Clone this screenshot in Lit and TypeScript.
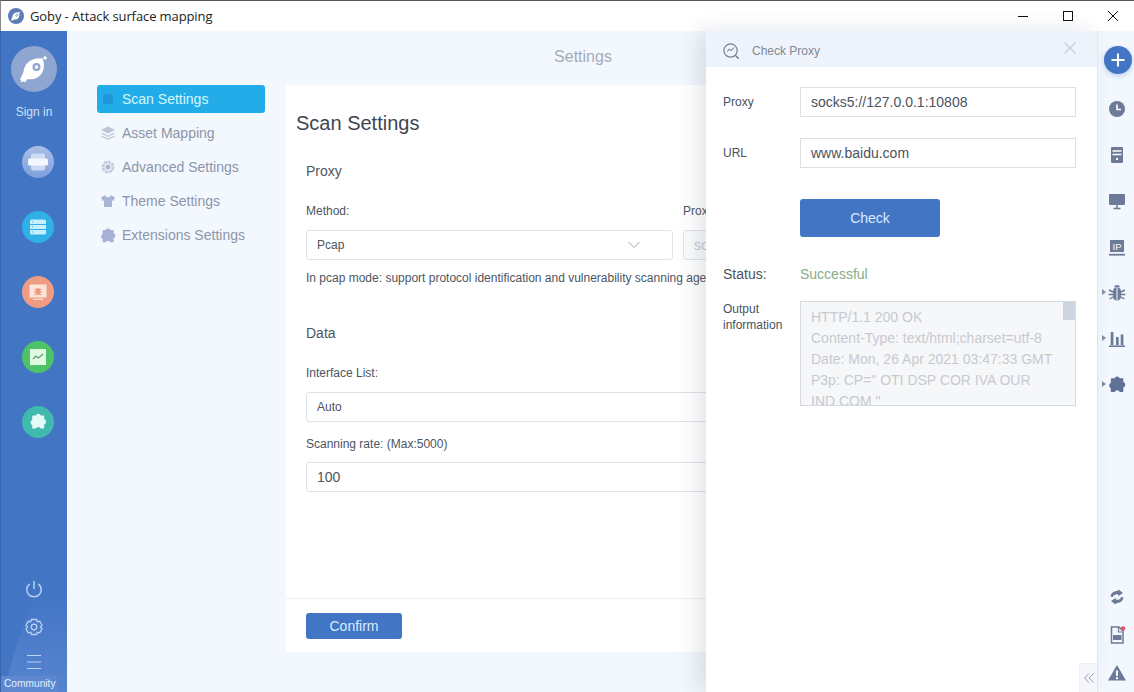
import { html, css, svg, LitElement } from "lit";
import { customElement } from "lit/decorators.js";

const FISH = svg`<path d="M31.500 12.500c-7-.8-13.500 1.500-17 7-1.200 2-1.800 4.200-2 6.500l-3.500 7.500 1.500.8-1.500 1.700 4-.5 1 1 2.500-3.500c5 1 11-.5 14.500-6 2.500-4.500 2.500-10 .5-14.500z" fill="#fff"/><circle cx="25.500" cy="21" r="4" fill="#8fa6d3"/><circle cx="25.500" cy="21" r="1.800" fill="#fff"/><circle cx="34" cy="12" r="1.700" fill="#fff"/>`;

const PUZZLE =
  "M5 3.500h2a2.300 2.300 0 0 1 4.200 0H14v3a2.300 2.300 0 0 1 0 4.400V14.500h-2.800a2.300 2.300 0 0 0-4.200 0H4v-3a2.300 2.300 0 0 1 0-4.200V4.500a1 1 0 0 1 1-1z";

const NAV = [
  {
    label: "Scan Settings",
    active: true,
    icon: svg`<rect x="3" y="3" width="10" height="10" rx="2" fill="#2196dc"/>`,
  },
  {
    label: "Asset Mapping",
    icon: svg`<path d="M8 1.500l7 3.500-7 3.500L1 5z" fill="#bcc6d8"/><path d="M1.500 8l6.500 3.300L14.500 8M1.500 11l6.500 3.300 6.500-3.300" fill="none" stroke="#bcc6d8" stroke-width="1.300"/>`,
  },
  {
    label: "Advanced Settings",
    icon: svg`<circle cx="8" cy="8" r="5" fill="none" stroke="#c3cddd" stroke-width="3" stroke-dasharray="3 .8"/><circle cx="8" cy="8" r="2.500" fill="#aab6cc"/>`,
  },
  {
    label: "Theme Settings",
    icon: svg`<path d="M5 2L1 4.500l1.500 3.500L4 7.300V14h8V7.300l1.500.7L15 4.500 11 2c-.5 1.500-1.500 2.200-3 2.200S5.500 3.500 5 2z" fill="#a9b5d6"/>`,
  },
  {
    label: "Extensions Settings",
    icon: svg`<path d="${PUZZLE}" fill="#a9b0d8" transform="translate(-1.800 -.800) scale(1.100)"/>`,
  },
];

const SIDE = [
  {
    cls: "c1",
    icon: svg`<rect x="3" y="1.500" width="14" height="17" rx="2" fill="#dbe5f9" opacity=".8"/><rect x="0" y="6.500" width="20" height="7" rx="1.500" fill="#f4f7fd"/>`,
  },
  {
    cls: "c2",
    icon: svg`<rect x="2" y="2.500" width="16" height="15" rx="1.500" fill="#c8f0fb"/><path d="M2 7.500h16M2 12.500h16" stroke="#2fb0e6" stroke-width="1"/><path d="M4 5h1M4 10h1M4 15h1" stroke="#2fb0e6" stroke-width="1"/>`,
  },
  {
    cls: "c3",
    icon: svg`<rect x="1.500" y="2.500" width="17" height="13" fill="#fde4da"/><path d="M5 17.300h10" stroke="#fde4da" stroke-width="1.200"/><ellipse cx="10" cy="9.500" rx="2.500" ry="3.500" fill="#eb9a80"/><path d="M6.500 7l2 1M13.500 7l-2 1M6 10h2M14 10h-2M6.500 13l2-1M13.500 13l-2-1" stroke="#eb9a80"/>`,
  },
  {
    cls: "c4",
    icon: svg`<rect x="2" y="2" width="16" height="16" fill="#e0f9e0"/><path d="M5 12l3-3 2.500 2 4.500-4" fill="none" stroke="#5c9c72" stroke-width="1.300"/>`,
  },
  {
    cls: "c5",
    icon: svg`<path d="${PUZZLE}" fill="#e4faf5" transform="translate(-.6 -.8) scale(1.200)"/>`,
  },
];

const G = "#6d7b98";

const RAIL_TOP = [
  {
    icon: svg`<circle cx="10" cy="10" r="8" fill="${G}"/><path d="M10 5.500V10.500h4" fill="none" stroke="#fff" stroke-width="1.600"/>`,
  },
  {
    icon: svg`<path d="M5 2h10a1 1 0 0 1 1 1v14a1 1 0 0 1-1 1H5a1 1 0 0 1-1-1V3a1 1 0 0 1 1-1z" fill="${G}"/><path d="M5.500 6h9M5.500 9.500h9" stroke="#fff" stroke-width="1.300"/><rect x="9" y="13" width="2" height="2" fill="#fff"/>`,
  },
  {
    icon: svg`<rect x="2" y="3" width="16" height="11" rx="1" fill="${G}"/><path d="M10 14v3M6.500 17.500h7" stroke="${G}" stroke-width="1.500"/>`,
  },
  {
    lift: true,
    icon: svg`<rect x="3" y="2" width="14" height="12" fill="${G}"/><text x="10" y="12" text-anchor="middle" class="ip">IP</text><path d="M2 16.700h16" stroke="${G}" stroke-width="1.800"/>`,
  },
  {
    arrow: true,
    icon: svg`<path d="M10 4.500c-2.800 0-4 1.500-4 4v5c0 2.500 1.800 4 4 4s4-1.500 4-4v-5c0-2.500-1.200-4-4-4z" fill="${G}"/><path d="M7 4.300c.5-1.500 1.500-2.300 3-2.300s2.500.8 3 2.300" fill="${G}"/><path d="M10 5v12" stroke="#f3f7fe" stroke-width="1"/><path d="M2 7l4 2M18 7l-4 2M1.500 11.500H6M18.500 11.500H14M2.500 16l3.500-2M17.500 16L14 14" stroke="${G}" stroke-width="1.400"/>`,
  },
  {
    arrow: true,
    icon: svg`<rect x="3.700" y="3" width="2.700" height="13" fill="${G}"/><rect x="9" y="8" width="2.700" height="8" fill="${G}"/><rect x="13.700" y="5.500" width="2.700" height="10.500" fill="${G}"/><path d="M2 17.200h16" stroke="${G}" stroke-width="1.600"/>`,
  },
  {
    arrow: true,
    icon: svg`<path d="${PUZZLE}" fill="#5f7199" transform="translate(-1.200 -1.200) scale(1.250)"/>`,
  },
];

const RAIL_BOTTOM = [
  svg`<path d="M3.500 9.500C4 6 7 3.800 10.500 4l1-1.500L16 6l-4.500 3-.8-1.800C8.500 7 6.500 7.800 5.800 10zM16.500 10.500C16 14 13 16.200 9.500 16l-1 1.500L4 14l4.500-3 .8 1.800c2.200.2 4.200-.6 4.900-2.800z" fill="${G}"/>`,
  svg`<path d="M4.500 2H12l4 4v12H4.500z" fill="none" stroke="${G}" stroke-width="1.500"/><path d="M11.500 2.500V7h4" fill="none" stroke="${G}" stroke-width="1.200"/><rect x="6" y="10" width="8.500" height="5" fill="${G}"/><circle cx="16" cy="3.500" r="2.300" fill="#e0566e"/>`,
  svg`<path d="M10 2l9 15.500H1z" fill="${G}"/><path d="M10 7.500v5.500" stroke="#fff" stroke-width="2"/><rect x="9" y="14.200" width="2" height="2" fill="#fff"/>`,
];

@customElement("app-root")
export class AppRoot extends LitElement {
  private renderTitleBar() {
    return html`
      <header class="titlebar">
        <svg class="app-icon" viewBox="0 0 46 46">
          <circle cx="23" cy="23" r="23" fill="#5b7cb8"/>
          ${FISH}
        </svg>
        <span class="app-title">Goby - Attack surface mapping</span>
        <div class="win-btns">
          <span class="win-btn"><svg viewBox="0 0 12 12" width="12" height="12"><path d="M1 6.500h10" stroke="#111" stroke-width="1"/></svg></span>
          <span class="win-btn"><svg viewBox="0 0 12 12" width="12" height="12"><rect x="1.500" y="1.500" width="9" height="9" fill="none" stroke="#111"/></svg></span>
          <span class="win-btn"><svg viewBox="0 0 12 12" width="12" height="12"><path d="M1 1l10 10M11 1L1 11" stroke="#111" stroke-width="1"/></svg></span>
        </div>
      </header>
    `;
  }

  private renderSidebar() {
    return html`
      <aside class="sidebar">
        <svg class="side-curve" viewBox="0 0 67 130" preserveAspectRatio="none">
          <defs>
            <linearGradient id="fade" x1="0" y1="0" x2="0" y2="1">
              <stop offset="0" stop-color="#7aa0e0" stop-opacity="0"/>
              <stop offset="1" stop-color="#7aa0e0" stop-opacity=".35"/>
            </linearGradient>
          </defs>
          <path d="M3 130C10 100 18 75 34 30L67 30V130z" fill="url(#fade)"/>
        </svg>
        <div class="avatar">
          <svg viewBox="0 0 46 46" width="46" height="46">${FISH}</svg>
        </div>
        <div class="sign-in">Sign in</div>
        <div class="side-menu">
          ${SIDE.map(
            (s) => html`<div class="side-item ${s.cls}">
              <svg viewBox="0 0 20 20" width="20" height="20">${s.icon}</svg>
            </div>`
          )}
        </div>
        <div class="side-bottom">
          <svg class="power" viewBox="0 0 20 20" width="20" height="20">
            <path d="M10 2v8" stroke="#b9d2f5" stroke-width="1.500" fill="none"/>
            <path d="M5.800 4.800a7.200 7.200 0 1 0 8.400 0" stroke="#b9d2f5" stroke-width="1.500" fill="none"/>
          </svg>
          <svg class="gear" viewBox="0 0 20 20" width="20" height="20">
            <path d="M7.500 2.500h5l.8 2.200 2.400-.4 2.300 4-1.500 1.700 1.500 1.800-2.300 4-2.400-.5-.8 2.200h-5l-.8-2.200-2.400.5-2.300-4L3.500 10 2 8.300l2.300-4 2.400.4z" fill="none" stroke="#b9d2f5" stroke-width="1.300"/>
            <circle cx="10" cy="10" r="2.800" fill="none" stroke="#b9d2f5" stroke-width="1.300"/>
          </svg>
          <svg class="menu" viewBox="0 0 20 20" width="20" height="20">
            <path d="M3 3.500h14M3 10h14M3 16.500h14" stroke="#b9d2f5" stroke-width="1.200"/>
          </svg>
          <div class="community">Community</div>
        </div>
      </aside>
    `;
  }

  private renderNav() {
    return html`
      <nav class="nav">
        ${NAV.map(
          (n) => html`<div class="nav-item ${n.active ? "active" : ""}">
            <svg viewBox="0 0 16 16" width="16" height="16">${n.icon}</svg>
            <span>${n.label}</span>
          </div>`
        )}
      </nav>
    `;
  }

  private renderCard() {
    return html`
      <section class="card">
        <div class="card-body">
          <h2>Scan Settings</h2>
          <div class="inner">
            <h3>Proxy</h3>
            <div class="two-col">
              <div>
                <div class="lbl">Method:</div>
                <div class="field select">
                  <span>Pcap</span>
                  <svg viewBox="0 0 12 8" width="12" height="8"><path d="M.5 1l5.500 5.500L11.500 1" fill="none" stroke="#9aa3b0" stroke-width="1"/></svg>
                </div>
              </div>
              <div>
                <div class="lbl">Proxy:</div>
                <div class="field disabled">socks5://127.0.0.1:10808</div>
              </div>
            </div>
            <p class="help">In pcap mode: support protocol identification and vulnerability scanning agent</p>
            <h3 class="data">Data</h3>
            <div class="lbl iface">Interface List:</div>
            <div class="field small">Auto</div>
            <div class="lbl rate">Scanning rate: (Max:5000)</div>
            <div class="field rate-input">100</div>
          </div>
        </div>
        <footer class="card-foot">
          <button class="btn confirm">Confirm</button>
        </footer>
      </section>
    `;
  }

  private renderDrawer() {
    return html`
      <div class="drawer">
        <div class="drawer-head">
          <svg viewBox="0 0 20 20" width="19" height="19">
            <circle cx="9" cy="9" r="7" fill="none" stroke="#76839a" stroke-width="1.300"/>
            <path d="M14 14l3.500 3.500" stroke="#76839a" stroke-width="1.500"/>
            <path d="M5.500 10l2-2.500 2 1.500 3-3" fill="none" stroke="#76839a" stroke-width="1.100"/>
          </svg>
          <span class="drawer-title">Check Proxy</span>
          <svg class="drawer-close" viewBox="0 0 14 14" width="14" height="14">
            <path d="M1.500 1.500l11 11M12.500 1.500l-11 11" stroke="#c6ccd6" stroke-width="1.100"/>
          </svg>
        </div>
        <div class="drawer-body">
          <div class="d-row">
            <label class="d-lbl">Proxy</label>
            <div class="d-input">socks5://127.0.0.1:10808</div>
          </div>
          <div class="d-row url">
            <label class="d-lbl">URL</label>
            <div class="d-input">www.baidu.com</div>
          </div>
          <button class="btn check">Check</button>
          <div class="d-status">
            <span class="st-lbl">Status:</span>
            <span class="st-ok">Successful</span>
          </div>
          <div class="d-output">
            <label class="d-lbl">Output information</label>
            <div class="out-box">
              <i class="thumb"></i>
              <div>HTTP/1.1 200 OK</div>
              <div>Content-Type: text/html;charset=utf-8</div>
              <div>Date: Mon, 26 Apr 2021 03:47:33 GMT</div>
              <div>P3p: CP=" OTI DSP COR IVA OUR</div>
              <div>IND COM "</div>
            </div>
          </div>
        </div>
        <div class="collapse-tab">
          <svg viewBox="0 0 12 12" width="12" height="12">
            <path d="M6 1.500L1.500 6 6 10.500M10.500 1.500L6 6l4.500 4.500" fill="none" stroke="#98a2b3" stroke-width="1"/>
          </svg>
        </div>
      </div>
    `;
  }

  private renderRail() {
    return html`
      <aside class="rail">
        <div class="plus">
          <svg viewBox="0 0 16 16" width="16" height="16"><path d="M8 1.500v13M1.500 8h13" stroke="#fff" stroke-width="2"/></svg>
        </div>
        <div class="rail-top">
          ${RAIL_TOP.map(
            (r) => html`<div class="rail-item ${r.lift ? "lift" : ""}">
              ${r.arrow ? html`<i class="tri"></i>` : ""}
              <svg viewBox="0 0 20 20" width="20" height="20">${r.icon}</svg>
            </div>`
          )}
        </div>
        <div class="rail-bottom">
          ${RAIL_BOTTOM.map(
            (icon) => html`<div class="rail-item low">
              <svg viewBox="0 0 20 20" width="20" height="20">${icon}</svg>
            </div>`
          )}
        </div>
      </aside>
    `;
  }

  render() {
    return html`
      ${this.renderTitleBar()}
      <div class="body">
        ${this.renderSidebar()}
        <main class="main">
          <div class="page-title">Settings</div>
          <div class="columns">${this.renderNav()} ${this.renderCard()}</div>
          ${this.renderDrawer()}
        </main>
        ${this.renderRail()}
      </div>
    `;
  }

  static styles = css`
    :host {
      display: flex;
      flex-direction: column;
      width: 1134px;
      height: 692px;
      overflow: hidden;
      font-family: "Liberation Sans", Arial, sans-serif;
      color: #444b57;
      background: #fff;
    }
    * {
      box-sizing: border-box;
    }

    /* title bar */
    .titlebar {
      flex: none;
      height: 31px;
      display: flex;
      align-items: center;
      padding-left: 7px;
      background: #fff;
      border-top: 1px solid #555;
      border-left: 1px solid #888;
    }
    .app-icon {
      width: 16px;
      height: 16px;
    }
    .app-title {
      margin-left: 6px;
      font: 13px "Open Sans", "Noto Sans", sans-serif;
      letter-spacing: -0.1px;
      color: #222;
    }
    .win-btns {
      margin-left: auto;
      margin-right: -1px;
      display: flex;
    }
    .win-btn {
      width: 45px;
      height: 30px;
      display: flex;
      align-items: center;
      justify-content: center;
    }

    .body {
      flex: 1;
      display: flex;
      min-height: 0;
    }

    /* left sidebar */
    .sidebar {
      flex: none;
      position: relative;
      width: 67px;
      display: flex;
      flex-direction: column;
      padding-top: 15px;
      background: #4375c5;
      border-left: 1px solid #3a62a8;
      overflow: hidden;
    }
    .side-curve {
      position: absolute;
      left: 0;
      bottom: 0;
      width: 67px;
      height: 130px;
    }
    .avatar {
      width: 46px;
      height: 46px;
      margin-left: 10px;
      border-radius: 50%;
      background: #8fa6d3;
    }
    .sign-in {
      margin-top: 13px;
      width: 66px;
      text-align: center;
      font-size: 12px;
      line-height: 14px;
      color: #cfe0f8;
    }
    .side-menu {
      margin-top: 27px;
      display: flex;
      flex-direction: column;
      gap: 33px;
      padding-left: 21px;
    }
    .side-item {
      width: 32px;
      height: 32px;
      border-radius: 50%;
      display: flex;
      align-items: center;
      justify-content: center;
    }
    .c1 { background: linear-gradient(#aabfe6, #7f9fdc); }
    .c2 { background: #2fb0e6; }
    .c3 { background: #ee9d84; }
    .c4 { background: #4dc268; }
    .c5 { background: #42b9af; }
    .side-bottom {
      position: relative;
      margin-top: auto;
      display: flex;
      flex-direction: column;
      align-items: center;
      width: 66px;
    }
    .gear {
      margin-top: 18px;
    }
    .menu {
      margin-top: 15px;
    }
    .community {
      margin-top: 4px;
      width: 56px;
      align-self: flex-start;
      padding-left: 3px;
      font-size: 10.200px;
      line-height: 16px;
      color: #e3eefc;
      background: #5d88d0;
    }

    /* settings page */
    .main {
      flex: 1;
      position: relative;
      min-width: 0;
      background: #f3f7fe;
    }
    .page-title {
      height: 54px;
      padding-left: 2px;
      text-align: center;
      font-size: 16px;
      line-height: 51px;
      color: #a4abb8;
    }
    .columns {
      display: flex;
      height: 567px;
      padding-left: 30px;
      padding-right: 20px;
      gap: 21px;
    }
    .nav {
      flex: none;
      width: 168px;
      display: flex;
      flex-direction: column;
      gap: 6px;
    }
    .nav-item {
      height: 28px;
      display: flex;
      align-items: center;
      gap: 6px;
      padding-left: 3px;
      border-radius: 3px;
      font-size: 14px;
      color: #8d95a8;
    }
    .nav-item.active {
      background: #22ade8;
      color: #d6f6ff;
    }
    .card {
      flex: 1;
      display: flex;
      flex-direction: column;
      min-width: 0;
      background: #fff;
    }
    .card-body {
      flex: 1;
      padding: 25px 10px 0;
    }
    h2 {
      margin: 0;
      font-size: 20px;
      font-weight: 400;
      line-height: 26px;
      color: #3f4652;
    }
    .inner {
      padding: 0 10px;
    }
    h3 {
      margin: 26px 0 0;
      font-size: 14px;
      font-weight: 400;
      line-height: 18px;
      color: #4e5561;
    }
    h3.data {
      margin-top: 39px;
    }
    .two-col {
      margin-top: 24px;
      display: grid;
      grid-template-columns: 367px 367px;
      gap: 10px;
    }
    .lbl {
      font-size: 12px;
      line-height: 14px;
      color: #4e5561;
    }
    .lbl.iface {
      margin-top: 24px;
    }
    .lbl.rate {
      margin-top: 15px;
    }
    .field {
      margin-top: 12px;
      height: 30px;
      display: flex;
      align-items: center;
      padding: 0 10px;
      border: 1px solid #dfe2e7;
      border-radius: 3px;
      font-size: 14px;
      color: #4e5561;
      white-space: nowrap;
    }
    .field.small {
      font-size: 12px;
    }
    .field.rate-input {
      margin-top: 11px;
    }
    .field.select {
      justify-content: space-between;
      padding-right: 32px;
      font-size: 12px;
    }
    .field.disabled {
      color: #c4c8cf;
      background: #fafbfc;
    }
    .help {
      margin: 11px 0 0;
      font-size: 12px;
      line-height: 14px;
      color: #4e5561;
      white-space: nowrap;
      overflow: hidden;
    }
    .card-foot {
      flex: none;
      height: 54px;
      padding: 14px 20px 0;
      border-top: 1px solid #eef0f3;
    }
    .btn {
      display: block;
      border: 0;
      border-radius: 3px;
      padding: 0;
      background: #4375c5;
      font-family: inherit;
      font-size: 14px;
      color: #d9ecff;
    }
    .btn.confirm {
      width: 96px;
      height: 26px;
    }

    /* check proxy drawer, over the page */
    .drawer {
      position: absolute;
      top: 0;
      right: 0;
      bottom: 0;
      width: 391px;
      background: #fff;
      box-shadow: -8px 0 20px rgba(60, 70, 90, 0.14);
    }
    .drawer-head {
      height: 36px;
      display: flex;
      align-items: center;
      padding: 4px 20px 0 16px;
      background: #eff3fb;
    }
    .drawer-title {
      margin-left: 11px;
      font-size: 12px;
      color: #7f8896;
    }
    .drawer-close {
      margin-left: auto;
      margin-top: -6px;
    }
    .drawer-body {
      padding: 20px 21px 0 17px;
    }
    .d-row {
      display: grid;
      grid-template-columns: 77px 276px;
      align-items: center;
    }
    .d-row.url {
      margin-top: 21px;
    }
    .d-lbl {
      font-size: 12px;
      line-height: 16px;
      color: #4b525e;
    }
    .d-input {
      height: 30px;
      padding: 0 10px;
      border: 1px solid #dcdfe4;
      font-size: 14px;
      line-height: 28px;
      color: #4b525e;
    }
    .btn.check {
      width: 140px;
      height: 38px;
      margin: 31px 0 0 77px;
    }
    .d-status {
      margin-top: 29px;
      display: grid;
      grid-template-columns: 77px auto;
      font-size: 14px;
      line-height: 16px;
    }
    .st-lbl {
      color: #4b525e;
    }
    .st-ok {
      color: #86ad86;
    }
    .d-output {
      margin-top: 19px;
      display: grid;
      grid-template-columns: 77px 276px;
    }
    .out-box {
      position: relative;
      height: 105px;
      padding: 5px 10px 0;
      border: 1px solid #d5d9e0;
      background: #f6f7f9;
      overflow: hidden;
      font-size: 14px;
      line-height: 21px;
      color: #c6cad0;
      white-space: nowrap;
    }
    .thumb {
      position: absolute;
      top: 0;
      right: 0;
      width: 12px;
      height: 18px;
      background: #ced4e0;
    }
    .collapse-tab {
      position: absolute;
      right: 0;
      bottom: 0;
      width: 18px;
      height: 29px;
      display: flex;
      align-items: center;
      justify-content: center;
      background: #f5f7fb;
      border: 1px solid #eceff4;
      border-right: 0;
      border-bottom: 0;
      border-radius: 3px 0 0 0;
    }

    /* right rail */
    .rail {
      flex: none;
      width: 37px;
      display: flex;
      flex-direction: column;
      align-items: center;
      padding-top: 15px;
      background: #f3f7fe;
      border-left: 1px solid #e6ebf5;
    }
    .plus {
      flex: none;
      width: 28px;
      height: 28px;
      margin-left: 4px;
      display: flex;
      align-items: center;
      justify-content: center;
      border-radius: 50%;
      background: #4375c5;
      box-shadow: 0 2px 5px rgba(67, 117, 197, 0.3);
    }
    .rail-top {
      margin-top: 12px;
      align-self: stretch;
    }
    .rail-item {
      position: relative;
      height: 46px;
      display: flex;
      align-items: center;
      justify-content: center;
      padding-left: 2px;
    }
    .rail-item.low {
      height: 38px;
    }
    .rail-item.lift {
      padding-top: 2px;
    }
    .tri {
      position: absolute;
      left: 4px;
      top: 50%;
      margin-top: -4px;
      border-left: 4px solid #7f8ca6;
      border-top: 3.500px solid transparent;
      border-bottom: 3.500px solid transparent;
    }
    .rail-bottom {
      margin-top: auto;
      align-self: stretch;
    }
    .ip {
      font-size: 9.500px;
      fill: #fff;
    }
  `;
}
